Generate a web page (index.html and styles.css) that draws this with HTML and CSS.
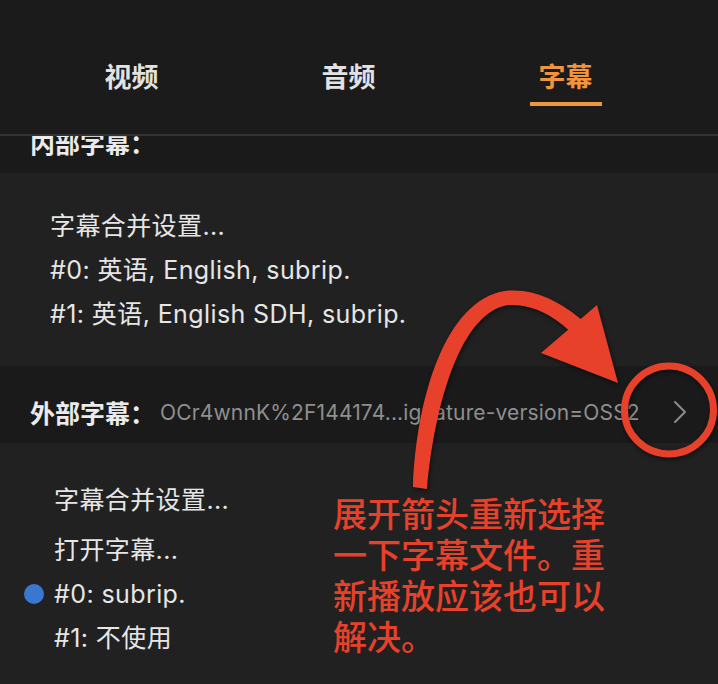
FILE: index.html
```html
<!DOCTYPE html>
<html lang="zh-CN">
<head>
    <meta charset="UTF-8">
    <meta name="viewport" content="width=device-width, initial-scale=1.0">
    <title>字幕</title>
    <link rel="stylesheet" href="styles.css">
</head>
<body>
    <div class="panel">
        <nav class="tabs">
            <div class="tab">视频</div>
            <div class="tab">音频</div>
            <div class="tab active">字幕</div>
        </nav>

        <div class="list">
            <div class="section-title scrolled">
                <span class="label">内部字幕：</span>
            </div>
            <ul class="group">
                <li>字幕合并设置...</li>
                <li>#0: 英语, English, subrip.</li>
                <li>#1: 英语, English SDH, subrip.</li>
            </ul>

            <div class="section-title">
                <span class="label">外部字幕：</span>
                <span class="url">OCr4wnnK%2F144174...ignature-version=OSS2</span>
                <svg class="chevron" width="14" height="24" viewBox="0 0 14 24">
                    <polyline points="2,2 12,12 2,22" fill="none" stroke="#8c8c8c" stroke-width="2" stroke-linecap="round" stroke-linejoin="round"/>
                </svg>
            </div>
            <ul class="group radio-group">
                <li class="first"><span class="dot"></span>字幕合并设置...</li>
                <li><span class="dot"></span>打开字幕...</li>
                <li class="selected"><span class="dot"></span>#0: subrip.</li>
                <li><span class="dot"></span>#1: 不使用</li>
            </ul>
        </div>

        <!-- annotation drawn on top of the screenshot -->
        <svg class="annotation" width="718" height="684" viewBox="0 0 718 684">
            <path d="M413,487 C416,400 445,300 505,291 C535,288 560,302 582,320 L572,333 C555,317 535,304 508,305 C462,312 435,400 427,489 Z" fill="#e8412b"/>
            <polygon points="618,383 541,353 597,305" fill="#e8412b"/>
            <ellipse cx="669" cy="410" rx="44.5" ry="44" fill="none" stroke="#e8412b" stroke-width="7"/>
        </svg>
        <p class="note">展开箭头重新选择一下字幕文件。重新播放应该也可以解决。</p>
    </div>
</body>
</html>
```

FILE: styles.css
```css
/* subtitle panel */
body {
    margin: 0;
    background-color: #212121;
    font-family: Inter, "Noto Sans CJK SC", sans-serif;
    color: #e6e6e6;
}

.panel {
    position: relative;
    width: 718px;
    height: 684px;
    overflow: hidden;
}

.tabs {
    display: grid;
    grid-template-columns: repeat(3, 217px);
    padding-left: 23px;
    height: 134px;
    background-color: #1b1b1b;
    border-bottom: 2px solid #333;
    position: relative;
    z-index: 1;
}

.tab {
    display: flex;
    flex-direction: column;
    align-items: center;
    padding-top: 62px;
    font-size: 27px;
    line-height: 32px;
    font-weight: 700;
    color: #e2e2e2;
}

.tab.active {
    color: #f0953f;
}

.tab.active::after {
    content: "";
    width: 72px;
    height: 4px;
    margin-top: 8px;
    background-color: #f0953f;
}

.list {
    height: 548px;
    overflow: hidden;
}

.section-title {
    display: flex;
    align-items: center;
    box-sizing: border-box;
    height: 77px;
    padding: 15px 30px 0 30px;
    background-color: #1a1a1a;
}

.section-title.scrolled {
    margin-top: -40px;
}

.label {
    font-size: 25px;
    font-weight: 700;
    color: #ebebeb;
}

.url {
    margin-left: 5px;
    font-size: 21px;
    letter-spacing: 0.15px;
    color: #8f8f8f;
    white-space: nowrap;
}

.chevron {
    margin-left: auto;
    margin-right: 1px;
}

.group {
    list-style: none;
    margin: 0;
    padding: 31px 0 30px 50px;
    font-size: 25px;
    letter-spacing: 0.4px;
    line-height: 44px;
}

.radio-group {
    padding: 35px 0 0 24px;
}

.radio-group li {
    display: flex;
    align-items: center;
    gap: 10px;
}

.radio-group li.first {
    margin-bottom: 6px;
}

.dot {
    width: 20px;
    height: 20px;
    border-radius: 50%;
}

.selected .dot {
    background-color: #3a77d1;
}

.annotation {
    position: absolute;
    left: 0;
    top: 0;
    filter: drop-shadow(1px 2px 2px rgba(0, 0, 0, 0.5));
}

.note {
    position: absolute;
    left: 333px;
    top: 492px;
    width: 8em;
    margin: 0;
    font-family: "Noto Sans CJK SC", sans-serif;
    font-size: 34px;
    line-height: 41px;
    font-weight: 500;
    color: #e8412b;
}
```
